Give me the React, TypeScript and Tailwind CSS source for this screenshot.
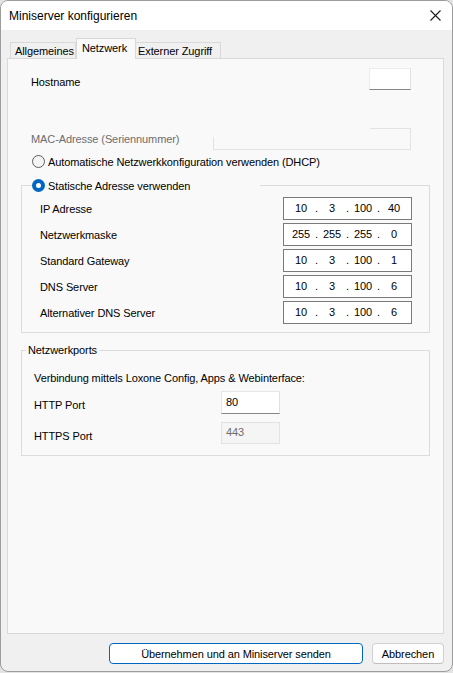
import React from "react";

function Radio({ checked }: { checked?: boolean }) {
  if (checked) {
    return (
      <span className="flex h-[13px] w-[13px] shrink-0 items-center justify-center rounded-full bg-[#0067c0]">
        <span className="h-[5px] w-[5px] rounded-full bg-white" />
      </span>
    );
  }
  return <span className="h-[13px] w-[13px] shrink-0 rounded-full border border-[#5c5c5c] bg-[#f4f4f4]" />;
}

function IpBox({ parts }: { parts: string[] }) {
  return (
    <div className="flex h-[23px] w-[129px] items-center border border-[#7a7a7a] bg-white pb-[2px] pl-[3px] text-black">
      {parts.map((p, i) => (
        <React.Fragment key={i}>
          <span className="w-[28px] text-center">{p}</span>
          {i < 3 && <span className="w-[3px] text-center">.</span>}
        </React.Fragment>
      ))}
    </div>
  );
}

function IpRow({ label, parts }: { label: string; parts: string[] }) {
  return (
    <div className="flex h-[23px] items-center justify-between pl-[18px] pr-[17px]">
      <span className="pt-[1px]">{label}</span>
      <IpBox parts={parts} />
    </div>
  );
}

export default function App() {
  return (
    <div className="h-[673px] w-[453px] bg-[#e4e4e4] font-['Liberation_Sans',Arial,sans-serif] text-[11px] leading-[14px] tracking-[-0.1px] text-black">
      <div className="flex h-[672px] w-[453px] flex-col overflow-hidden rounded-[8px] border border-[#9c9c9c] bg-[#f0f0f0]">
        {/* Title bar */}
        <div className="flex h-[29px] shrink-0 items-center justify-between bg-white pl-[8px] pr-[10px]">
          <span className="pt-[1px] text-[12px] tracking-normal">Miniserver konfigurieren</span>
          <svg width="11" height="11" viewBox="0 0 11 11" className="mr-[1px]">
            <path d="M0.5 0.5 L10.5 10.5 M10.5 0.5 L0.5 10.5" stroke="#1b1b1b" strokeWidth="1.1" fill="none" />
          </svg>
        </div>

        {/* Body */}
        <div className="flex flex-1 flex-col pl-[6px] pr-[8px] pt-[8px]">
          {/* Tabs */}
          <div className="relative z-10 flex h-[20px] items-end whitespace-nowrap pl-[3px]">
            <div className="flex h-[16px] w-[66px] items-center border-l border-r border-t border-[#d9d9d9] bg-[#f0f0f0] pl-[4px] pt-[1px]">
              Allgemeines
            </div>
            <div className="mb-[-1px] flex h-[21px] w-[60px] items-start border-l border-r border-t border-[#d9d9d9] bg-[#f9f9f9] pl-[5px] pt-[2px]">
              Netzwerk
            </div>
            <div className="flex h-[16px] w-[85px] items-center border-r border-t border-[#d9d9d9] bg-[#f0f0f0] pl-[2px] pt-[1px]">
              Externer Zugriff
            </div>
          </div>

          {/* Panel */}
          <div className="flex h-[576px] w-[437px] flex-col border border-[#d9d9d9] bg-[#f9f9f9]">
            {/* Hostname */}
            <div className="mt-[9px] flex h-[22px] items-start justify-between pl-[23px] pr-[32px]">
              <span className="pt-[7px]">Hostname</span>
              <div className="h-[22px] w-[42px] border border-b-[#868686] border-l-[#ececec] border-r-[#e2e2e2] border-t-[#ececec] bg-white" />
            </div>

            {/* MAC */}
            <div className="mt-[38px] flex h-[22px] items-start justify-between pl-[23px] pr-[32px]">
              <span className="pt-[4px] text-[#6d6d6d]">MAC-Adresse (Seriennummer)</span>
              <div className="relative h-[22px] w-[198px] border border-[#e3e3e3] bg-[#f9f9f9]">
                <div className="absolute left-[-1px] top-[-1px] h-[9px] w-[157px] bg-[#f9f9f9]" />
              </div>
            </div>

            {/* Radio DHCP */}
            <div className="mt-[5px] flex h-[13px] items-center gap-[3px] pl-[24px]">
              <Radio />
              <span className="pt-[1px]">Automatische Netzwerkkonfiguration verwenden (DHCP)</span>
            </div>

            {/* Static group */}
            <fieldset className="mx-[13px] mt-[10px] border border-[#dcdcdc] pb-[8px]">
              <legend className="ml-[10px] flex h-[14px] w-[228px] items-center gap-[3px]">
                <Radio checked />
                <span className="pt-[1px]">Statische Adresse verwenden</span>
              </legend>
              <div className="mt-[5px] flex flex-col gap-[3px]">
                <IpRow label="IP Adresse" parts={["10", "3", "100", "40"]} />
                <IpRow label="Netzwerkmaske" parts={["255", "255", "255", "0"]} />
                <IpRow label="Standard Gateway" parts={["10", "3", "100", "1"]} />
                <IpRow label="DNS Server" parts={["10", "3", "100", "6"]} />
                <IpRow label="Alternativer DNS Server" parts={["10", "3", "100", "6"]} />
              </div>
            </fieldset>

            {/* Ports group */}
            <fieldset className="mx-[13px] mt-[10px] border border-[#dcdcdc] pb-[11px]">
              <legend className="ml-[4px] px-[2px]">Netzwerkports</legend>
              <div className="mt-[14px] pl-[12px]">Verbindung mittels Loxone Config, Apps &amp; Webinterface:</div>
              <div className="mt-[6px] flex h-[23px] items-center pl-[12px]">
                <span className="w-[187px] pt-[5px]">HTTP Port</span>
                <div className="flex h-[23px] w-[59px] items-center border border-b-[#868686] border-l-[#e6e6e6] border-r-[#e0e0e0] border-t-[#e6e6e6] bg-white pb-[2px] pl-[4px]">
                  80
                </div>
              </div>
              <div className="mt-[8px] flex h-[22px] items-center pl-[12px]">
                <span className="w-[187px] pt-[5px]">HTTPS Port</span>
                <div className="flex h-[22px] w-[59px] items-center border border-[#e2e2e2] bg-[#f5f5f5] pb-[2px] pl-[4px] text-[#6d6d6d]">
                  443
                </div>
              </div>
            </fieldset>
          </div>

          {/* Buttons */}
          <div className="mt-[9px] flex justify-end gap-[9px]">
            <button className="h-[21px] w-[254px] rounded-[4px] border border-[#0067c0] bg-white text-center text-black">
              Übernehmen und an Miniserver senden
            </button>
            <button className="h-[21px] w-[72px] rounded-[4px] border border-[#d0d0d0] border-b-[#bdbdbd] bg-[#fdfdfd] text-center text-black">
              Abbrechen
            </button>
          </div>
        </div>
      </div>
    </div>
  );
}
